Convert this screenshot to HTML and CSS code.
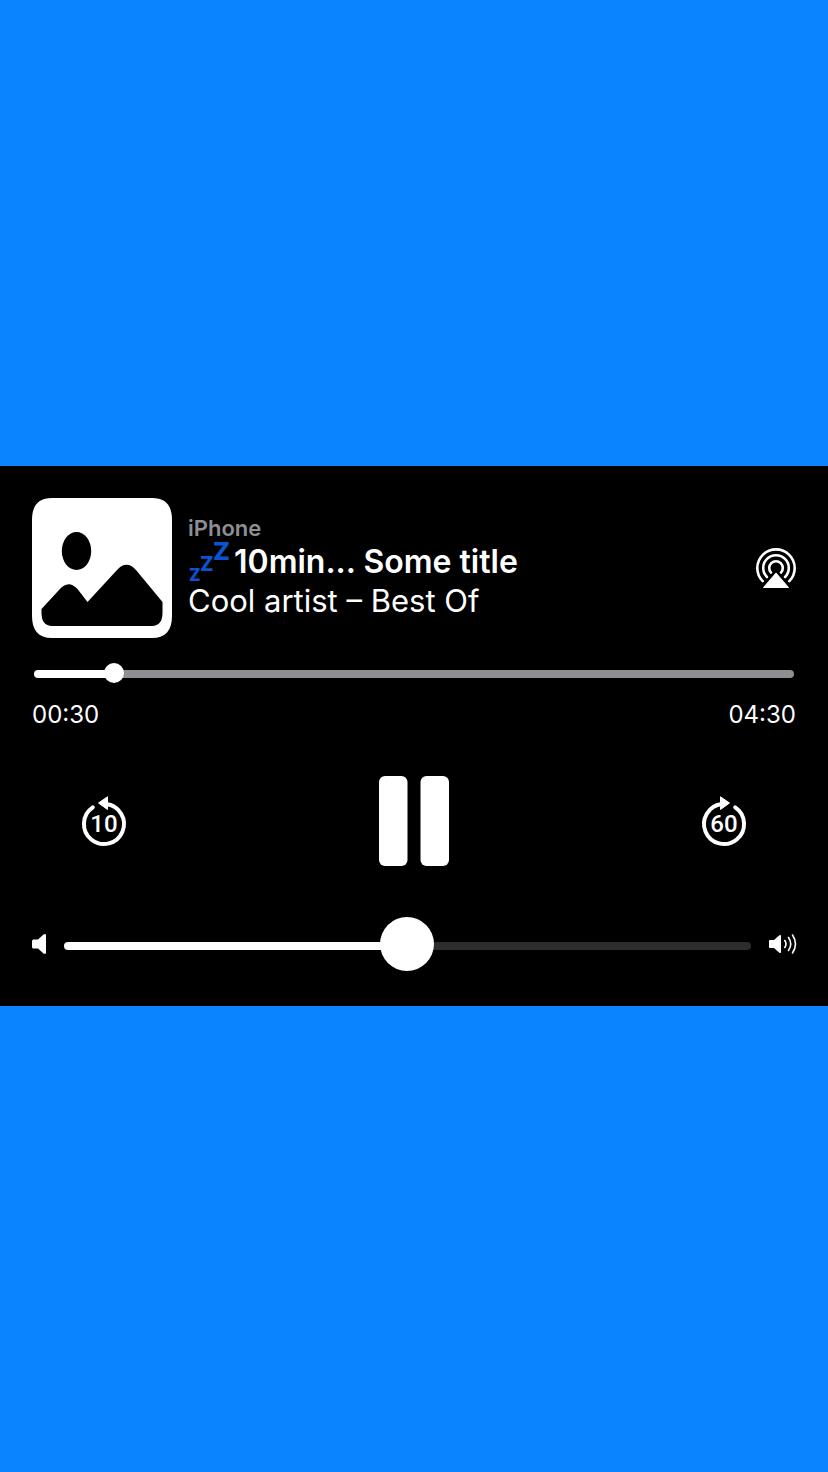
FILE: index.html
```html
<!DOCTYPE html>
<html lang="en">
<head>
<meta charset="utf-8">
<meta name="viewport" content="width=device-width, initial-scale=1">
<title>Now Playing</title>
<link rel="stylesheet" href="styles.css">
</head>
<body>
<main class="player">
  <header class="header">
    <svg class="artwork" viewBox="0 0 140 140" role="img" aria-label="Artwork">
      <path fill="#fff" d="M20 0H120C134 0 140 8 140 22V118C140 132 134 140 120 140H20C6 140 0 132 0 118V22C0 8 6 0 20 0Z"/>
      <ellipse cx="44.500" cy="53" rx="14.700" ry="19"/>
      <path d="M9.500 111 27 92C33 85 39 84 45.500 91L55.500 104 85 72C91 65 98 65 104 72L130.500 104V115C130.500 123 127 128 120 128H20C13 128 9.500 123 9.500 115Z"/>
    </svg>
    <div class="info">
      <p class="device">iPhone</p>
      <h1 class="title"><svg class="sleep" viewBox="0 0 46 40" role="img" aria-label="💤"><text x="1" y="39" font-size="17">Z</text><text x="12" y="29" font-size="20">Z</text><text x="25" y="18" font-size="25">Z</text></svg>10min... Some title</h1>
      <p class="artist">Cool artist – Best Of</p>
    </div>
    <button class="button" type="button" aria-label="AirPlay">
      <svg class="airplay" viewBox="0 0 40 40">
        <g fill="none" stroke="#fff" stroke-width="2.600" stroke-linecap="round">
          <path d="M6.700 33.200A18.700 18.700 0 1 1 33.300 33.200"/>
          <path d="M10.900 29A12.800 12.800 0 1 1 29.100 29"/>
          <path d="M15 24.600A6.800 6.800 0 1 1 25 24.600"/>
        </g>
        <path fill="#fff" stroke="#fff" stroke-linejoin="round" d="M20 25 32.500 39.500H7.500Z"/>
      </svg>
    </button>
  </header>
  <section class="progress">
    <input class="slider seek" type="range" min="0" max="740" value="70" aria-label="Playback position">
  </section>
  <div class="times"><span>00:30</span><span>04:30</span></div>
  <section class="controls">
    <button class="button" type="button" aria-label="Back 10 seconds">
      <svg class="skip" viewBox="0 0 44 50">
        <path d="M10.800 11.400A20 20 0 1 0 24 8.100" fill="none" stroke="#fff" stroke-width="4" stroke-linecap="round"/>
        <path d="M16.500 7 25.500 .800V13.500Z" fill="#fff" stroke="#fff" stroke-linejoin="round"/>
        <text x="22" y="36">10</text>
      </svg>
    </button>
    <button class="button" type="button" aria-label="Pause">
      <svg class="pause" viewBox="0 0 70 90">
        <rect width="28.500" height="90" rx="6"/>
        <rect x="41.500" width="28.500" height="90" rx="6"/>
      </svg>
    </button>
    <button class="button" type="button" aria-label="Forward 60 seconds">
      <svg class="skip" viewBox="0 0 44 50">
        <path d="M33.200 11.400A20 20 0 1 1 20 8.100" fill="none" stroke="#fff" stroke-width="4" stroke-linecap="round"/>
        <path d="M27.500 7 18.500 .800V13.500Z" fill="#fff" stroke="#fff" stroke-linejoin="round"/>
        <text x="22" y="36">60</text>
      </svg>
    </button>
  </section>
  <section class="volume">
    <svg class="quiet" viewBox="0 0 14 24" aria-hidden="true">
      <path d="M1.500 5.500H6L11.500 .500Q14 -.800 14 1.500V18.500Q14 20.800 11.500 19.500L6 14.500H1.500Q0 14.500 0 13V7Q0 5.500 1.500 5.500Z" fill="#fff"/>
    </svg>
    <input class="slider level" type="range" min="0" max="1000" value="499" aria-label="Volume">
    <svg class="loud" viewBox="0 0 27 24" aria-hidden="true">
      <path d="M1 6H5L10 1.500Q12 .200 12 2V18Q12 19.800 10 18.500L5 14H1Q0 14 0 13V7Q0 6 1 6Z" fill="#fff"/>
      <path d="M15.800 6.500Q18.200 10 15.800 13.500M19.500 3.500Q24 10 19.500 16.500M23.500 1Q29.500 10 23.500 19" fill="none" stroke="#fff" stroke-width="1.600" stroke-linecap="round"/>
    </svg>
  </section>
</main>
</body>
</html>
```
FILE: styles.css
```css
* {
  box-sizing: border-box;
}

body {
  display: flex;
  align-items: center;
  min-height: 100vh;
  margin: 0;
  background: #0a84ff;
  color: #fff;
  font-family: Inter, "Liberation Sans", sans-serif;
}

.player {
  width: 100%;
  padding: 32px;
  background: #000;
}

svg {
  display: block;
  overflow: visible;
}

.header {
  display: flex;
  align-items: center;
  gap: 16px;
}

.artwork {
  flex: none;
  width: 140px;
  height: 140px;
}

.info {
  flex: 1;
  min-width: 0;
  padding-bottom: 2px;
}

.device,
.title,
.artist {
  margin: 0;
}

.device {
  color: #8e8e93;
  font-size: 22px;
  font-weight: 600;
  line-height: 27px;
}

.title {
  display: flex;
  font-size: 32px;
  font-weight: 600;
  line-height: 39px;
}

.artist {
  font-size: 31px;
  font-weight: 400;
  line-height: 38px;
}

.sleep {
  flex: none;
  width: 46px;
  height: 40px;
  fill: #0a54d0;
  font-weight: 800;
}

.button {
  flex: none;
  padding: 0;
  border: 0;
  background: none;
  color: #fff;
  font: inherit;
}

.airplay {
  width: 40px;
  height: 40px;
}

.progress {
  padding: 25px 2px 0;
}

.slider {
  display: block;
  width: 100%;
  margin: 0;
  background: none;
  -webkit-appearance: none;
  appearance: none;
}

.slider::-webkit-slider-runnable-track {
  height: 8px;
  border-radius: 4px;
}

.slider::-webkit-slider-thumb {
  -webkit-appearance: none;
  border-radius: 50%;
  background: #fff;
}

.seek {
  height: 22px;
}

.seek::-webkit-slider-runnable-track {
  background: linear-gradient(to right, #fff 10%, #8e8e93 10%);
}

.seek::-webkit-slider-thumb {
  width: 20px;
  height: 20px;
  margin-top: -7px;
}

.times {
  display: flex;
  justify-content: space-between;
  margin-top: 16px;
  font-size: 24px;
  line-height: 28px;
}

.controls {
  display: flex;
  align-items: center;
  justify-content: space-between;
  padding: 47px 50px 52px;
}

.skip {
  width: 44px;
  height: 50px;
}

.skip text {
  fill: #fff;
  font-family: Roboto, sans-serif;
  font-size: 24px;
  font-weight: 500;
  text-anchor: middle;
}

.pause {
  width: 70px;
  height: 90px;
  fill: #fff;
}

.volume {
  display: flex;
  align-items: center;
  gap: 18px;
}

.quiet {
  flex: none;
  width: 14px;
  height: 24px;
}

.loud {
  flex: none;
  width: 27px;
  height: 24px;
}

.level {
  flex: 1;
  min-width: 0;
  height: 56px;
}

.level::-webkit-slider-runnable-track {
  background: linear-gradient(to right, #fff 50%, #2c2c2e 50%);
}

.level::-webkit-slider-thumb {
  width: 54px;
  height: 54px;
  margin-top: -25px;
}
```
